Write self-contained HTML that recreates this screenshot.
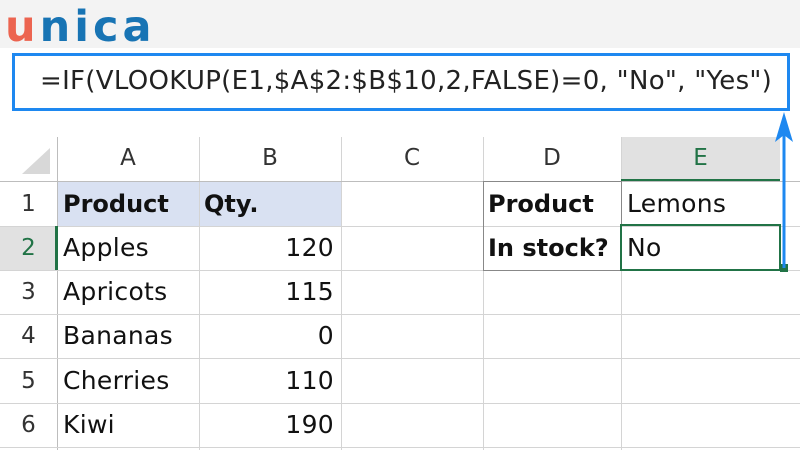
<!DOCTYPE html>
<html><head><style>
body{margin:0;width:800px;height:450px;overflow:hidden;background:#fff;font-family:"DejaVu Sans","Liberation Sans",sans-serif;position:relative}
.abs{position:absolute}
.top{left:0;top:0;width:800px;height:48px;background:#f3f3f3}
.logo{left:5px;top:3px;font-family:"DejaVu Sans","Liberation Sans",sans-serif;font-size:43px;font-weight:bold;letter-spacing:4px;color:#1874b4;line-height:48px}
.logo span{color:#ec6450}
.fbox{left:12px;top:53px;width:772px;height:52px;border:3px solid #1e88f0;background:#fff}
.ftext{left:40px;top:66px;font-size:26px;color:#222;white-space:nowrap;letter-spacing:0.3px}
.vl{width:1px;background:#d4d4d4}
.hl{height:1px;background:#d4d4d4}
.t{font-size:25px;color:#111;white-space:nowrap;letter-spacing:0.3px}
.b{font-weight:bold;font-size:24px;letter-spacing:0}
.h{font-size:23px;color:#333;text-align:center}
.rn{font-size:23px;color:#333;width:57px;text-align:center}
</style></head><body>
<div class="abs top"></div>
<div class="abs logo"><span>u</span>nica</div>
<div class="abs fbox"></div>
<div class="abs ftext">=IF(VLOOKUP(E1,$A$2:$B$10,2,FALSE)=0, "No", "Yes")</div>

<div class="abs" style="left:621px;top:137px;width:159px;height:44px;background:#e1e1e1"></div>
<div class="abs" style="left:0;top:226px;width:57px;height:44px;background:#e1e1e1"></div>
<div class="abs" style="left:57px;top:181px;width:284px;height:45px;background:#d9e1f2"></div>
<svg class="abs" style="left:20px;top:146px" width="32" height="30"><polygon points="30,2 30,28 2,28" fill="#d8d8d8"/></svg>

<div class="abs vl" style="left:57px;top:137px;height:313px;background:#bdbdbd"></div>
<div class="abs vl" style="left:199px;top:137px;height:313px"></div>
<div class="abs vl" style="left:341px;top:137px;height:313px"></div>
<div class="abs vl" style="left:483px;top:137px;height:313px"></div>
<div class="abs vl" style="left:621px;top:137px;height:313px"></div>
<div class="abs hl" style="left:0;top:181px;width:800px;background:#bdbdbd"></div>
<div class="abs hl" style="left:0;top:226px;width:800px"></div>
<div class="abs hl" style="left:0;top:270px;width:800px"></div>
<div class="abs hl" style="left:0;top:314px;width:800px"></div>
<div class="abs hl" style="left:0;top:358px;width:800px"></div>
<div class="abs hl" style="left:0;top:403px;width:800px"></div>
<div class="abs hl" style="left:0;top:447px;width:800px"></div>
<div class="abs" style="left:483px;top:181px;width:137px;height:88px;border:1px solid #888"></div>
<div class="abs" style="left:621px;top:179px;width:159px;height:2px;background:#217346"></div>
<div class="abs" style="left:55px;top:226px;width:3px;height:44px;background:#217346"></div>
<div class="abs" style="left:620px;top:224px;width:157px;height:43px;border:2px solid #217346"></div>
<div class="abs" style="left:780px;top:264px;width:8px;height:8px;background:#217346"></div>

<div class="abs h" style="left:57px;top:145px;width:142px">A</div>
<div class="abs h" style="left:199px;top:145px;width:142px">B</div>
<div class="abs h" style="left:341px;top:145px;width:142px">C</div>
<div class="abs h" style="left:483px;top:145px;width:138px">D</div>
<div class="abs h" style="left:621px;top:145px;width:159px;color:#217346">E</div>

<div class="abs rn" style="left:0;top:191px">1</div>
<div class="abs rn" style="left:0;top:235px;color:#217346">2</div>
<div class="abs rn" style="left:0;top:279px">3</div>
<div class="abs rn" style="left:0;top:323px">4</div>
<div class="abs rn" style="left:0;top:368px">5</div>
<div class="abs rn" style="left:0;top:412px">6</div>

<div class="abs t b" style="left:63px;top:190px">Product</div>
<div class="abs t b" style="left:204px;top:190px">Qty.</div>
<div class="abs t" style="left:63px;top:233px">Apples</div>
<div class="abs t" style="left:63px;top:277px">Apricots</div>
<div class="abs t" style="left:63px;top:321px">Bananas</div>
<div class="abs t" style="left:63px;top:366px">Cherries</div>
<div class="abs t" style="left:63px;top:410px">Kiwi</div>
<div class="abs t" style="left:199px;width:135px;text-align:right;top:233px">120</div>
<div class="abs t" style="left:199px;width:135px;text-align:right;top:277px">115</div>
<div class="abs t" style="left:199px;width:135px;text-align:right;top:321px">0</div>
<div class="abs t" style="left:199px;width:135px;text-align:right;top:366px">110</div>
<div class="abs t" style="left:199px;width:135px;text-align:right;top:410px">190</div>
<div class="abs t b" style="left:488px;top:190px">Product</div>
<div class="abs t b" style="left:488px;top:234px">In stock?</div>
<div class="abs t" style="left:627px;top:189px">Lemons</div>
<div class="abs t" style="left:627px;top:233px">No</div>

<svg class="abs" style="left:770px;top:108px" width="30" height="165">
<line x1="14" y1="20" x2="14" y2="160" stroke="#1e88f0" stroke-width="3"/>
<polygon points="14,4 5,34 14,27 23,34" fill="#1e88f0"/>
</svg>
</body></html>
